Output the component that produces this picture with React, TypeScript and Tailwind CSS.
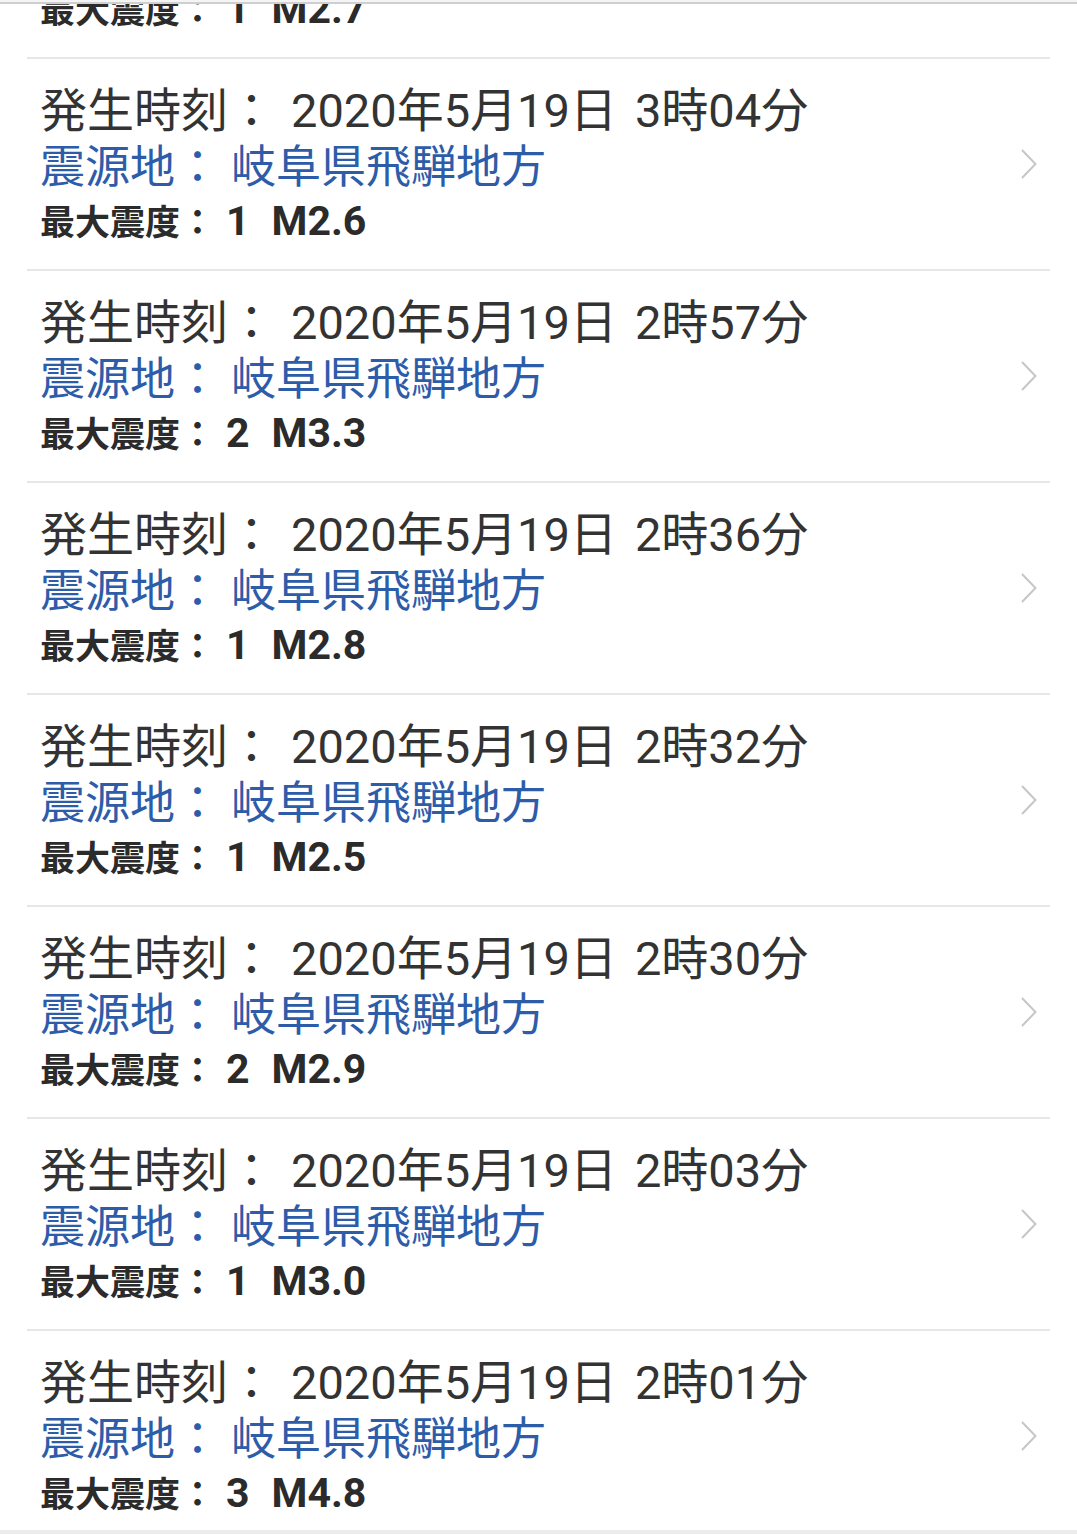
interface Quake {
  date: string;
  clock: string;
  place: string;
  intensity: string;
  magnitude: string;
}

const quakes: Quake[] = [
  { date: "2020年5月19日", clock: "3時12分", place: "岐阜県飛騨地方", intensity: "1", magnitude: "M2.7" },
  { date: "2020年5月19日", clock: "3時04分", place: "岐阜県飛騨地方", intensity: "1", magnitude: "M2.6" },
  { date: "2020年5月19日", clock: "2時57分", place: "岐阜県飛騨地方", intensity: "2", magnitude: "M3.3" },
  { date: "2020年5月19日", clock: "2時36分", place: "岐阜県飛騨地方", intensity: "1", magnitude: "M2.8" },
  { date: "2020年5月19日", clock: "2時32分", place: "岐阜県飛騨地方", intensity: "1", magnitude: "M2.5" },
  { date: "2020年5月19日", clock: "2時30分", place: "岐阜県飛騨地方", intensity: "2", magnitude: "M2.9" },
  { date: "2020年5月19日", clock: "2時03分", place: "岐阜県飛騨地方", intensity: "1", magnitude: "M3.0" },
  { date: "2020年5月19日", clock: "2時01分", place: "岐阜県飛騨地方", intensity: "3", magnitude: "M4.8" },
];

function Chevron() {
  return (
    <svg width="18" height="32" viewBox="0 0 18 32" className="shrink-0">
      <path d="M2 2 L15.5 16 L2 30" fill="none" stroke="#c6c6c6" strokeWidth="2" />
    </svg>
  );
}

function Row({ q }: { q: Quake }) {
  return (
    <li className="mx-[27px] border-b-2 border-[#e6e6e6] h-[212px] pl-[13px] pr-[12px] flex items-center justify-between">
      <div className="flex flex-col">
        <div className="h-[57px] leading-[57px] text-[47px] text-[#333333] whitespace-nowrap">
          発生時刻：<span className="ml-[16px]">{q.date}</span><span className="ml-[18px]">{q.clock}</span>
        </div>
        <div className="h-[57px] leading-[57px] text-[45px] text-[#2d5ca9] whitespace-nowrap">
          震源地：<span className="ml-[11px]">{q.place}</span>
        </div>
        <div className="h-[51px] leading-[51px] text-[35px] font-bold text-[#2b2b2b] whitespace-nowrap">
          最大震度：
          <span className="ml-[11px] text-[41px]">{q.intensity}</span>
          <span className="ml-[22px] text-[41px]">{q.magnitude}</span>
        </div>
      </div>
      <Chevron />
    </li>
  );
}

export default function App() {
  return (
    <div
      className="relative w-[1077px] h-[1534px] overflow-hidden bg-white"
      style={{ fontFamily: 'Roboto, "Noto Sans CJK JP", sans-serif' }}
    >
      <ul className="-mt-[153px]">
        {quakes.map((q, i) => (
          <Row key={i} q={q} />
        ))}
      </ul>
      <div className="absolute top-0 left-0 right-0 h-[2px] bg-[#f4f4f4]" />
      <div className="absolute top-[2px] left-0 right-0 h-[2px] bg-[#cfcfcf]" />
      <div className="absolute bottom-0 left-0 right-0 h-[4px] bg-[#ececec]" />
    </div>
  );
}
